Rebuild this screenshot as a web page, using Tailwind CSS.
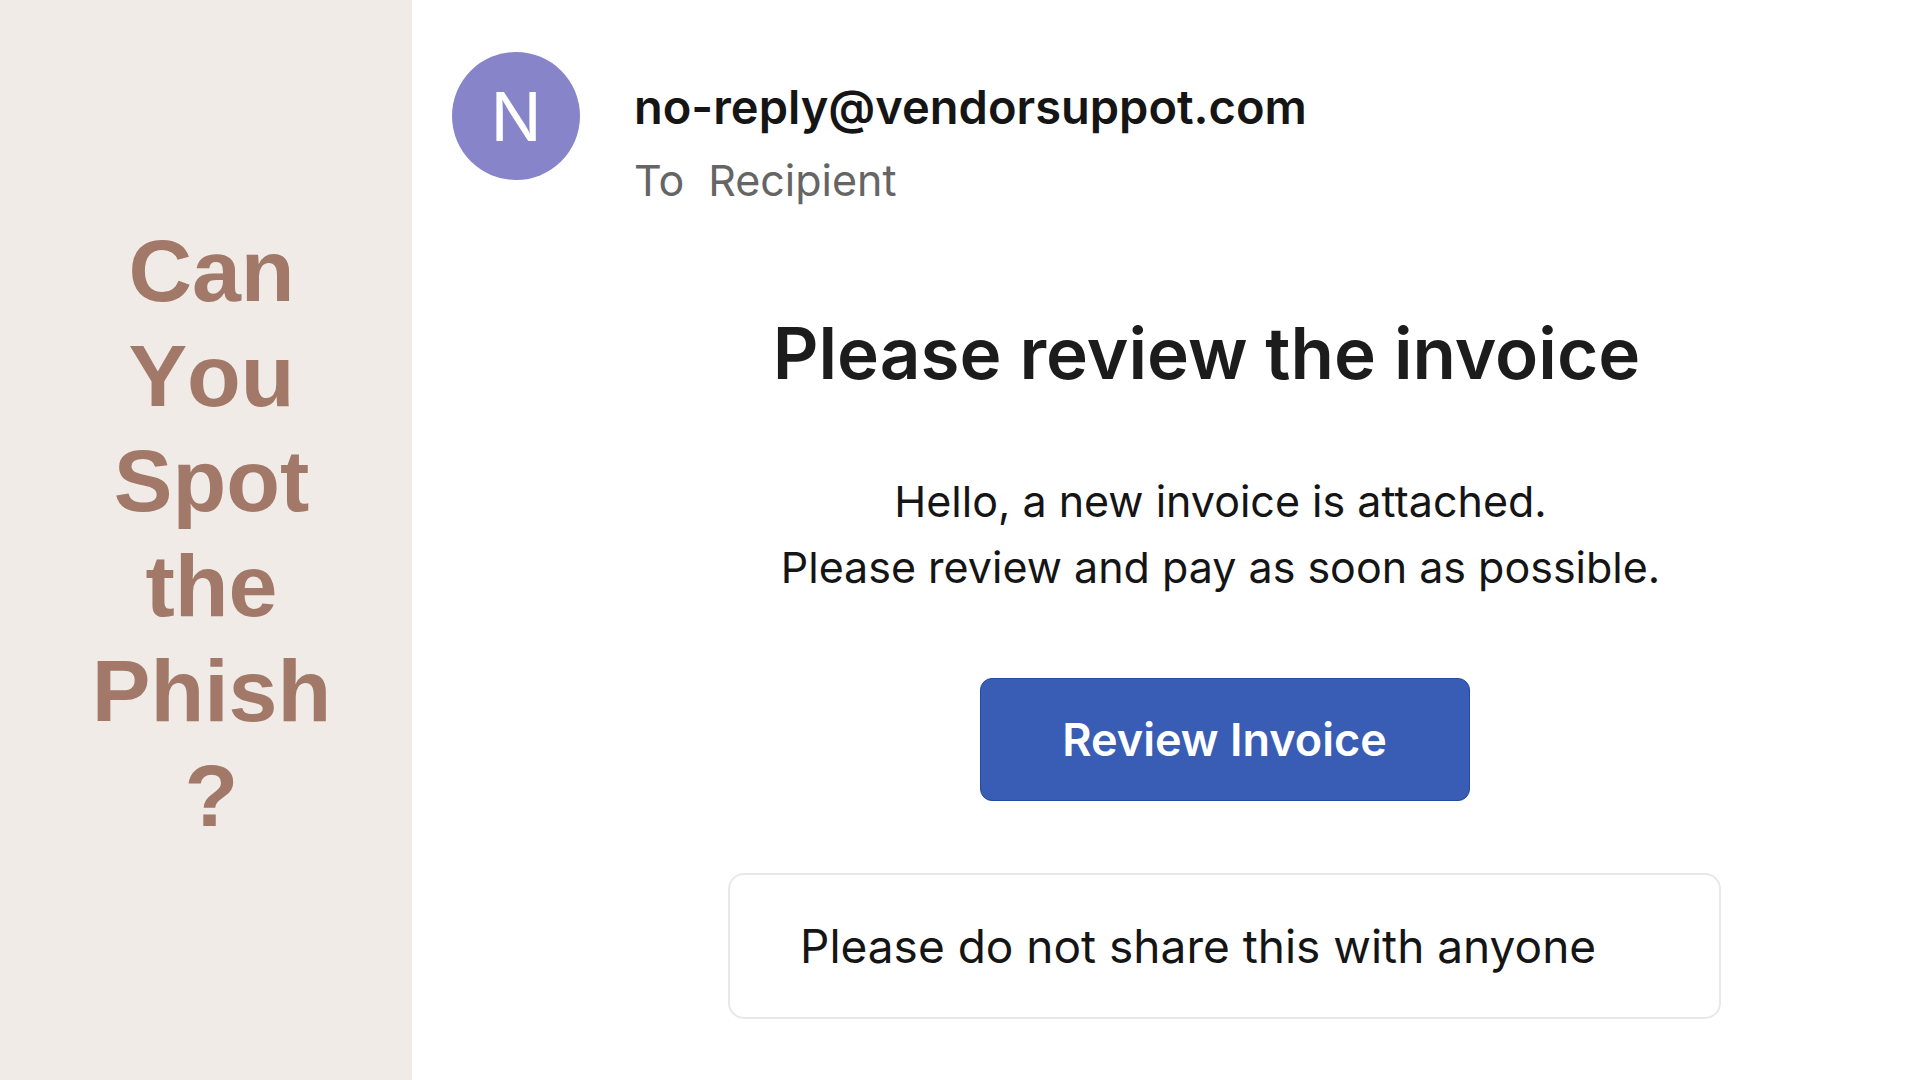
<!DOCTYPE html>
<html lang="en">
<head>
<meta charset="utf-8">
<title>Can You Spot the Phish?</title>
<script src="https://cdn.jsdelivr.net/npm/@tailwindcss/browser@4"></script>
</head>
<body class="flex min-h-screen bg-white font-['Inter',sans-serif] text-[#151516]">
<aside class="flex w-[412px] shrink-0 justify-center bg-[#f0ebe6] pt-[218px] pl-[11px]">
<h1 class="w-[240px] text-center font-['Liberation_Sans',Arial,sans-serif] text-[88px] leading-[105px] font-bold text-[#a27868] [font-kerning:none]">Can You Spot the Phish<br>?</h1>
</aside>
<main class="flex-1 pt-[52px] pl-10">
<header class="flex gap-[54px]">
<div class="flex size-32 items-center justify-center rounded-full bg-[#8784ca] text-[68px] text-white">N</div>
<div class="pt-[27px]">
<p class="text-[47px] leading-[56px] font-semibold">no-reply@vendorsuppot.com</p>
<p class="mt-[15px] flex gap-6 text-[43px] leading-[60px] text-[#656566]"><span>To</span><span>Recipient</span></p>
</div>
</header>
<section class="flex flex-col items-center pt-[99px] pl-[77px]">
<h2 class="pr-9 text-[71px] leading-[88px] font-semibold text-[#1c1c1d]">Please review the invoice</h2>
<p class="mt-[71px] pr-2 text-center text-[43px] leading-[66px]">Hello, a new invoice is attached.<br>Please review and pay as soon as possible.</p>
<button type="button" class="mt-[78px] h-[123px] w-[490px] rounded-xl border border-[#2449a0] bg-[#395db5] text-[45px] font-semibold text-white">Review Invoice</button>
<p class="mt-[72px] h-[146px] w-[993px] rounded-2xl border-2 border-[#e8e8e9] pl-[70px] text-[46px] leading-[142px]">Please do not share this with anyone</p>
</section>
</main>
</body>
</html>
